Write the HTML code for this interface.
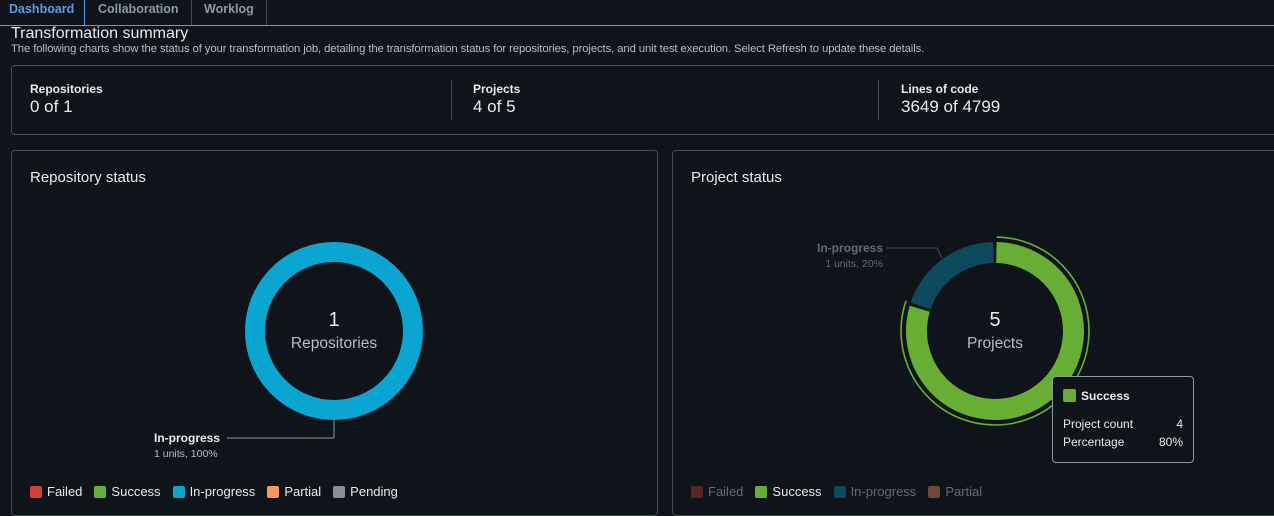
<!DOCTYPE html>
<html><head><style>
body{margin:0;width:1274px;height:516px;background:#0f141a;font-family:"Liberation Sans",sans-serif;overflow:hidden;position:relative;color:#d1d5db}
.a{position:absolute;white-space:nowrap}
.b{font-weight:bold}
.panel{position:absolute;border:1px solid #414d5c;border-radius:4px;box-sizing:border-box}
.sw{display:inline-block;width:12px;height:12px;border-radius:2px;vertical-align:-2px;margin-right:5px}
.lg{position:absolute;top:484px;font-size:13px;white-space:nowrap}
.lg span.i{margin-right:12px}
</style></head><body>
<div class="a" style="left:0;top:25px;width:1274px;height:1px;background:#539fe5"></div>
<div class="a" style="left:84px;top:0;width:1px;height:26px;background:#539fe5"></div>
<div class="a" style="left:191px;top:0;width:1px;height:25px;background:#414d5c"></div>
<div class="a" style="left:266px;top:0;width:1px;height:25px;background:#414d5c"></div>
<div class="a b" style="left:9px;top:2px;font-size:12.5px;color:#539fe5">Dashboard</div>
<div class="a b" style="left:98px;top:2px;font-size:12.5px;color:#8d99a8">Collaboration</div>
<div class="a b" style="left:204px;top:2px;font-size:12.5px;color:#8d99a8">Worklog</div>
<div class="a" style="left:11px;top:25px;font-size:16px;color:#e9ebed">Transformation summary</div>
<div class="a" style="left:11px;top:43px;font-size:11.3px;letter-spacing:-0.1px;color:#b6bec9">The following charts show the status of your transformation job, detailing the transformation status for repositories, projects, and unit test execution. Select Refresh to update these details.</div>
<div class="panel" style="left:11px;top:65px;width:1280px;height:70px"></div>
<div class="a" style="left:451px;top:80px;width:1px;height:40px;background:#414d5c"></div>
<div class="a" style="left:878px;top:80px;width:1px;height:40px;background:#414d5c"></div>
<div class="a b" style="left:30px;top:82px;font-size:12px;color:#e9ebed">Repositories</div>
<div class="a" style="left:30px;top:97px;font-size:17px;color:#e9ebed">0 of 1</div>
<div class="a b" style="left:473px;top:82px;font-size:12px;color:#e9ebed">Projects</div>
<div class="a" style="left:473px;top:97px;font-size:17px;color:#e9ebed">4 of 5</div>
<div class="a b" style="left:901px;top:82px;font-size:12px;color:#e9ebed">Lines of code</div>
<div class="a" style="left:901px;top:97px;font-size:17px;color:#e9ebed">3649 of 4799</div>
<div class="panel" style="left:11px;top:150px;width:647px;height:366px"></div>
<div class="panel" style="left:672px;top:150px;width:620px;height:366px"></div>
<div class="a" style="left:30px;top:169px;font-size:15px;color:#e9ebed">Repository status</div>
<div class="a" style="left:691px;top:169px;font-size:15px;color:#e9ebed">Project status</div>
<svg class="a" style="left:0;top:0" width="1274" height="516">
<circle cx="334" cy="331" r="79" fill="none" stroke="#0aa6d1" stroke-width="20"/>
<polyline points="227,438 334,438 334,420" fill="none" stroke="#8d99a8" stroke-width="1"/>
<g transform="rotate(-89 995 331)">
<circle cx="995" cy="331" r="78.5" fill="none" stroke="#69ae34" stroke-width="21" stroke-dasharray="391 500"/>
<circle cx="995" cy="331" r="78.5" fill="none" stroke="#0d4a5c" stroke-width="21" stroke-dasharray="0 394 96 500"/>
<circle cx="995" cy="331" r="94" fill="none" stroke="#69ae34" stroke-width="1.6" stroke-dasharray="472 600"/>
</g>
<polyline points="886,248 937,248 942,258" fill="none" stroke="#414d5c" stroke-width="1"/>
</svg>
<div class="a" style="left:294px;top:309px;width:80px;text-align:center;font-size:20px;color:#e9ebed">1</div>
<div class="a" style="left:274px;top:335px;width:120px;text-align:center;font-size:15.5px;color:#b6bec9">Repositories</div>
<div class="a" style="left:955px;top:309px;width:80px;text-align:center;font-size:20px;color:#e9ebed">5</div>
<div class="a" style="left:935px;top:335px;width:120px;text-align:center;font-size:15.5px;color:#b6bec9">Projects</div>
<div class="a b" style="left:154px;top:431px;font-size:12px;color:#e9ebed">In-progress</div>
<div class="a" style="left:154px;top:448px;font-size:10.5px;color:#b6bec9">1 units, 100%</div>
<div class="a b" style="right:391px;top:241px;font-size:12px;color:#5f6b7a">In-progress</div>
<div class="a" style="right:391px;top:258px;font-size:10.5px;color:#5f6b7a">1 units, 20%</div>
<div class="panel" style="left:1052px;top:376px;width:142px;height:87px;background:#0f141a;border-color:#8d99a8"></div>
<div class="a b" style="left:1063px;top:389px;font-size:12px;color:#e9ebed"><span class="sw" style="background:#69ae34;width:13px;height:13px"></span>Success</div>
<div class="a" style="left:1063px;top:417px;font-size:12px;color:#e9ebed">Project count</div>
<div class="a" style="left:1063px;top:435px;font-size:12px;color:#e9ebed">Percentage</div>
<div class="a" style="right:91px;top:417px;font-size:12px;color:#e9ebed">4</div>
<div class="a" style="right:91px;top:435px;font-size:12px;color:#e9ebed">80%</div>
<div class="lg" style="left:30px;color:#e9ebed">
<span class="i"><span class="sw" style="background:#d63f38"></span>Failed</span><span class="i"><span class="sw" style="background:#69ae34"></span>Success</span><span class="i"><span class="sw" style="background:#0aa6d1"></span>In-progress</span><span class="i"><span class="sw" style="background:#fc965b"></span>Partial</span><span class="i"><span class="sw" style="background:#8d8d95"></span>Pending</span>
</div>
<div class="lg" style="left:691px;color:#5f6b7a">
<span class="i"><span class="sw" style="background:#5a2426"></span>Failed</span><span class="i" style="color:#e9ebed"><span class="sw" style="background:#69ae34"></span>Success</span><span class="i"><span class="sw" style="background:#0d4a5c"></span>In-progress</span><span class="i"><span class="sw" style="background:#6b4a38"></span>Partial</span>
</div>
</body></html>
